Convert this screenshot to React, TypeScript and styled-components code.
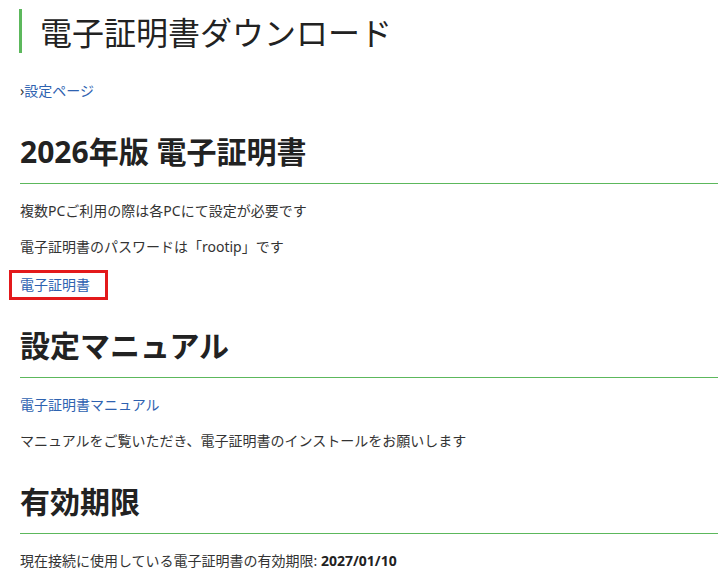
import React from "react"
import styled, { createGlobalStyle } from "styled-components"

// ______________________________________________________
// グローバル
const GlobalStyle = createGlobalStyle`
  html, body {
    margin: 0;
    padding: 0;
    background: #fff;
  }
  body {
    font-family: "Noto Sans", "Noto Sans CJK JP", sans-serif;
    color: #333;
  }
`

const green = "#5cb85c"
const linkBlue = "#2e62b0"

// ______________________________________________________
//
const Page = styled.main`
  padding: 9px 0 0 20px;
`

const Title = styled.h1`
  margin: 0 0 27px -1px;
  padding-left: 18px;
  border-left: 3px solid ${green};
  font-family: "Noto Sans CJK JP", sans-serif;
  font-size: 32px;
  font-weight: 400;
  line-height: 44px;
  color: #222;
`

const Section = styled.section`
  display: block;
`

const Heading = styled.h2`
  margin: 29px 0 16px;
  padding-bottom: 10px;
  border-bottom: 1px solid ${green};
  font-family: "Noto Sans", "Noto Sans CJK JP", sans-serif;
  font-size: 30px;
  font-weight: 700;
  line-height: 42px;
  color: #222;
`

const Text = styled.p<{ $gap?: number }>`
  margin: ${p => p.$gap ?? 14}px 0 14px;
  font-size: 14px;
  line-height: 22px;
`

const Link = styled.a`
  color: ${linkBlue};
  text-decoration: none;
`

const Arrow = styled.span`
  color: #333;
`

// 赤枠で囲んだリンク
const Marked = styled.span`
  display: inline-block;
  margin: -4px 0 -4px -11px;
  padding: 1px 15px 1px 8px;
  border: 3px solid #e3191b;
  line-height: 22px;
`

const Strong = styled.b`
  font-weight: 700;
  color: #222;
`

// ______________________________________________________
//
const App: React.FC = () => {
  return (
    <Page>
      <GlobalStyle />
      <Title>電子証明書ダウンロード</Title>
      <Text>
        <Link href="#">
          <Arrow>›</Arrow>設定ページ
        </Link>
      </Text>

      <Section>
        <Heading>2026年版 電子証明書</Heading>
        <Text>複数PCご利用の際は各PCにて設定が必要です</Text>
        <Text>電子証明書のパスワードは「rootip」です</Text>
        <Text $gap={16}>
          <Marked>
            <Link href="#">電子証明書</Link>
          </Marked>
        </Text>
      </Section>

      <Section>
        <Heading>設定マニュアル</Heading>
        <Text>
          <Link href="#">電子証明書マニュアル</Link>
        </Text>
        <Text>マニュアルをご覧いただき、電子証明書のインストールをお願いします</Text>
      </Section>

      <Section>
        <Heading>有効期限</Heading>
        <Text>
          現在接続に使用している電子証明書の有効期限: <Strong>2027/01/10</Strong>
        </Text>
      </Section>
    </Page>
  )
}

export default App
